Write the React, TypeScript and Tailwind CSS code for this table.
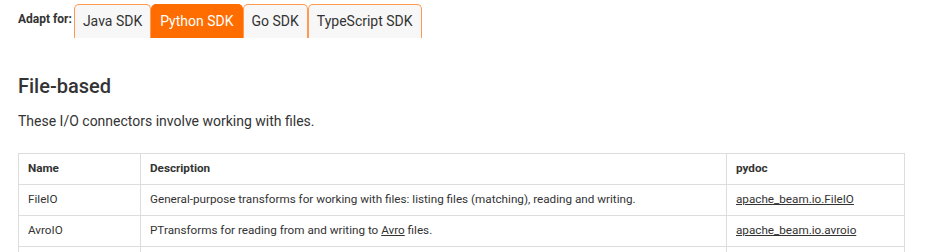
const tabs = ["Java SDK", "Python SDK", "Go SDK", "TypeScript SDK"];

const rows = [
  {
    name: "FileIO",
    desc: <>General-purpose transforms for working with files: listing files (matching), reading and writing.</>,
    doc: "apache_beam.io.FileIO",
  },
  {
    name: "AvroIO",
    desc: (
      <>
        PTransforms for reading from and writing to <a className="underline">Avro</a> files.
      </>
    ),
    doc: "apache_beam.io.avroio",
  },
  { name: "", desc: <></>, doc: "" },
];

const App = () => {
  return (
    <div className="w-[945px] h-[252px] overflow-hidden bg-white text-[#333] font-['Roboto',sans-serif]">
      <div className="flex items-end pl-[18px] pt-[4px]">
        <span className="text-[12px] font-bold text-[#333] mr-[2px] mb-[10px]">Adapt for:</span>
        {tabs.map((t) => (
          <div
            key={t}
            className={
              t === "Python SDK"
                ? "h-[34px] flex items-center px-[8px] text-[14px] bg-[#ff6d00] text-white border border-b-0 border-[#ff6d00] rounded-t-[5px]"
                : "h-[34px] flex items-center px-[8px] text-[14px] bg-[#f7f7f7] text-[#333] border border-b-0 border-[#ff9a50] rounded-t-[5px]"
            }
          >
            {t}
          </div>
        ))}
      </div>
      <div className="px-[18px]">
        <h2 className="mt-[36px] text-[20px] font-medium leading-[24px] text-[#333]">File-based</h2>
        <p className="mt-[13px] text-[14px] leading-[20px] text-[#333]">These I/O connectors involve working with files.</p>
        <table className="mt-[22px] w-[887px] border-collapse text-[11.7px] text-[#333]">
          <thead>
            <tr className="h-[31px]">
              <th className="w-[122px] border border-[#ddd] px-[9px] text-left font-bold">Name</th>
              <th className="w-[586px] border border-[#ddd] px-[9px] text-left font-bold">Description</th>
              <th className="border border-[#ddd] px-[9px] text-left font-bold">pydoc</th>
            </tr>
          </thead>
          <tbody>
            {rows.map((r, i) => (
              <tr key={i} className="h-[31px]">
                <td className="border border-[#ddd] px-[9px]">{r.name}</td>
                <td className="border border-[#ddd] px-[9px]">{r.desc}</td>
                <td className="border border-[#ddd] px-[9px]">
                  <a className="underline">{r.doc}</a>
                </td>
              </tr>
            ))}
          </tbody>
        </table>
      </div>
    </div>
  );
};

export default App;
